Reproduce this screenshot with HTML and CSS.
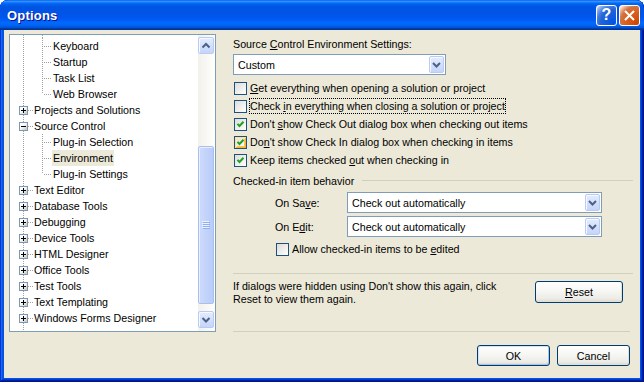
FILE: index.html
```html
<!DOCTYPE html>
<html lang="en">
<head>
    <meta charset="UTF-8">
    <title>Options</title>
    <link rel="stylesheet" href="styles.css">
</head>
<body>
    <div class="window">
        <div class="titlebar">
            <span class="title">Options</span>
            <div class="title-buttons">
                <span class="tb-btn help">?</span>
                <span class="tb-btn close">
                    <svg width="21" height="21" viewBox="0 0 21 21"><path d="M6 6l9 9M15 6l-9 9" stroke="#fff" stroke-width="2" fill="none"/></svg>
                </span>
            </div>
        </div>

        <div class="client">
            <!-- Tree of option pages -->
            <div class="tree">
                <div class="tree-list">
                    <div class="spacer"><span class="g"></span><span class="g pipe"></span></div>
                    <div class="node"><span class="g"></span><span class="g tee"></span><span class="label">Keyboard</span></div>
                    <div class="node"><span class="g"></span><span class="g tee"></span><span class="label">Startup</span></div>
                    <div class="node"><span class="g"></span><span class="g tee"></span><span class="label">Task List</span></div>
                    <div class="node"><span class="g"></span><span class="g ell"></span><span class="label">Web Browser</span></div>
                    <div class="node"><span class="g exp"><span class="exp-box"><svg width="7" height="7"><path d="M1 3.5h5M3.5 1v5"/></svg></span></span><span class="label">Projects and Solutions</span></div>
                    <div class="node"><span class="g exp"><span class="exp-box"><svg width="7" height="7"><path d="M1 3.5h5"/></svg></span></span><span class="label">Source Control</span></div>
                    <div class="node"><span class="g"></span><span class="g tee"></span><span class="label">Plug-in Selection</span></div>
                    <div class="node"><span class="g"></span><span class="g tee"></span><span class="label sel">Environment</span></div>
                    <div class="node"><span class="g"></span><span class="g ell"></span><span class="label">Plug-in Settings</span></div>
                    <div class="node"><span class="g exp"><span class="exp-box"><svg width="7" height="7"><path d="M1 3.5h5M3.5 1v5"/></svg></span></span><span class="label">Text Editor</span></div>
                    <div class="node"><span class="g exp"><span class="exp-box"><svg width="7" height="7"><path d="M1 3.5h5M3.5 1v5"/></svg></span></span><span class="label">Database Tools</span></div>
                    <div class="node"><span class="g exp"><span class="exp-box"><svg width="7" height="7"><path d="M1 3.5h5M3.5 1v5"/></svg></span></span><span class="label">Debugging</span></div>
                    <div class="node"><span class="g exp"><span class="exp-box"><svg width="7" height="7"><path d="M1 3.5h5M3.5 1v5"/></svg></span></span><span class="label">Device Tools</span></div>
                    <div class="node"><span class="g exp"><span class="exp-box"><svg width="7" height="7"><path d="M1 3.5h5M3.5 1v5"/></svg></span></span><span class="label">HTML Designer</span></div>
                    <div class="node"><span class="g exp"><span class="exp-box"><svg width="7" height="7"><path d="M1 3.5h5M3.5 1v5"/></svg></span></span><span class="label">Office Tools</span></div>
                    <div class="node"><span class="g exp"><span class="exp-box"><svg width="7" height="7"><path d="M1 3.5h5M3.5 1v5"/></svg></span></span><span class="label">Test Tools</span></div>
                    <div class="node"><span class="g exp"><span class="exp-box"><svg width="7" height="7"><path d="M1 3.5h5M3.5 1v5"/></svg></span></span><span class="label">Text Templating</span></div>
                    <div class="node"><span class="g exp"><span class="exp-box"><svg width="7" height="7"><path d="M1 3.5h5M3.5 1v5"/></svg></span></span><span class="label">Windows Forms Designer</span></div>
                </div>
                <div class="vscroll">
                    <span class="sb-btn up"><svg width="14" height="15" viewBox="0 0 14 15"><path d="M3.5 9.5l3.5-3.5 3.5 3.5" stroke="#4D6185" stroke-width="2" fill="none"/></svg></span>
                    <span class="sb-track"></span>
                    <span class="sb-thumb"><svg width="8" height="8" viewBox="0 0 8 8"><path d="M0 0.5h7M0 2.5h7M0 4.5h7M0 6.5h7" stroke="#EEF4FE"/><path d="M1 1.5h7M1 3.5h7M1 5.5h7M1 7.5h7" stroke="#8CB0F8"/></svg></span>
                    <span class="sb-btn down"><svg width="14" height="15" viewBox="0 0 14 15"><path d="M3.5 6l3.5 3.5 3.5-3.5" stroke="#4D6185" stroke-width="2" fill="none"/></svg></span>
                </div>
            </div>

            <!-- Settings page -->
            <div class="panel">
                <div class="caption">Source <u>C</u>ontrol Environment Settings:</div>
                <div class="combo combo-main">
                    <span class="combo-value">Custom</span>
                    <span class="drop"><svg width="13" height="15" viewBox="0 0 13 15"><path d="M3 6l3.5 3.5 3.5-3.5" stroke="#4D6185" stroke-width="2" fill="none"/></svg></span>
                </div>

                <div class="checks">
                    <div class="check-row"><span class="box"></span><span class="check-label"><u>G</u>et everything when opening a solution or project</span></div>
                    <div class="check-row"><span class="box"></span><span class="check-label focus">Check <u>i</u>n everything when closing a solution or project</span></div>
                    <div class="check-row"><span class="box"><svg width="11" height="11" viewBox="0 0 11 11"><path d="M2.5 4.8l2 2.2 4-4.2" stroke="#21A121" stroke-width="2" fill="none"/></svg></span><span class="check-label">Don't <u>s</u>how Check Out dialog box when checking out items</span></div>
                    <div class="check-row"><span class="box hot"><svg width="11" height="11" viewBox="0 0 11 11"><path d="M2.5 4.8l2 2.2 4-4.2" stroke="#21A121" stroke-width="2" fill="none"/></svg></span><span class="check-label">Do<u>n</u>'t show Check In dialog box when checking in items</span></div>
                    <div class="check-row"><span class="box"><svg width="11" height="11" viewBox="0 0 11 11"><path d="M2.5 4.8l2 2.2 4-4.2" stroke="#21A121" stroke-width="2" fill="none"/></svg></span><span class="check-label">Keep items checked <u>o</u>ut when checking in</span></div>
                </div>

                <div class="group-head"><span>Checked-in item behavior</span><span class="rule"></span></div>

                <div class="field-row">
                    <span class="field-label">On Sa<u>v</u>e:</span>
                    <div class="combo combo-field">
                        <span class="combo-value">Check out automatically</span>
                        <span class="drop"><svg width="13" height="15" viewBox="0 0 13 15"><path d="M3 6l3.5 3.5 3.5-3.5" stroke="#4D6185" stroke-width="2" fill="none"/></svg></span>
                    </div>
                </div>
                <div class="field-row second">
                    <span class="field-label">On E<u>d</u>it:</span>
                    <div class="combo combo-field">
                        <span class="combo-value">Check out automatically</span>
                        <span class="drop"><svg width="13" height="15" viewBox="0 0 13 15"><path d="M3 6l3.5 3.5 3.5-3.5" stroke="#4D6185" stroke-width="2" fill="none"/></svg></span>
                    </div>
                </div>
                <div class="check-row allow"><span class="box"></span><span class="check-label">Allow checked-in items to be <u>e</u>dited</span></div>

                <div class="separator"></div>

                <div class="info-row">
                    <p class="info-text">If dialogs were hidden using Don't show this again, click Reset to view them again.</p>
                    <span class="btn reset"><u>R</u>eset</span>
                </div>

                <div class="footer">
                    <div class="separator"></div>
                    <div class="footer-buttons">
                        <span class="btn default">OK</span>
                        <span class="btn">Cancel</span>
                    </div>
                </div>
            </div>
        </div>
    </div>
</body>
</html>
```

FILE: styles.css
```css
* {
    margin: 0;
    padding: 0;
    box-sizing: border-box;
}

body {
    width: 644px;
    height: 382px;
    overflow: hidden;
    background: #ffffff;
    font-family: "Liberation Sans", Arial, sans-serif;
    font-size: 10.7px;
    color: #000000;
}

u {
    text-decoration: underline;
    text-underline-offset: 1px;
}

/* Window frame */

.window {
    width: 644px;
    height: 382px;
    display: flex;
    flex-direction: column;
    background: #0055e5;
    border-radius: 8px 8px 0 0;
    overflow: hidden;
    box-shadow: inset -1px -1px #00138c, inset 1px 1px #0831d9,
                inset -2px -2px #001ea0, inset 2px 2px #166aee,
                inset -3px -3px #003bda, inset 3px 3px #0855dd;
}

.titlebar {
    height: 30px;
    flex: none;
    display: flex;
    align-items: center;
    padding: 0 4px 0 7px;
    border-radius: 8px 8px 0 0;
    background: linear-gradient(to bottom, #0058ee 0%, #3a93ff 4%, #288eff 6%, #127dff 8%,
                #036ffc 10%, #0262ee 14%, #0057e5 20%, #0054e3 24%, #0055eb 56%,
                #005bf5 66%, #026afe 76%, #0062ef 86%, #0052d6 92%, #0040ab 94%, #003092 100%);
}

.title {
    flex: 1;
    color: #ffffff;
    font-weight: bold;
    font-size: 13px;
    letter-spacing: 0.2px;
    text-shadow: 1px 1px #0f1089;
}

.title-buttons {
    display: flex;
    gap: 2px;
}

.tb-btn {
    width: 21px;
    height: 21px;
    border: 1px solid #ffffff;
    border-radius: 3px;
    display: flex;
    align-items: center;
    justify-content: center;
    color: #ffffff;
    font-weight: bold;
    font-size: 16px;
}

.tb-btn.help {
    background: radial-gradient(circle at 90% 90%, #0054e9 0%, #2263d5 55%, #4479e4 70%, #a3bbec 90%, #ffffff 100%);
}

.tb-btn.close {
    background: radial-gradient(circle at 90% 90%, #cc4600 0%, #dc6527 55%, #cd7546 70%, #ffccb2 90%, #ffffff 100%);
}

.tb-btn.close svg {
    margin: -1px;
}

.client {
    flex: 1;
    margin: 0 4px 4px 4px;
    background: #ece9d8;
    display: flex;
}

/* Tree view */

.tree {
    width: 207px;
    height: 298px;
    margin: 4px 0 0 5px;
    border: 1px solid #7f9db9;
    background: #ffffff;
    display: flex;
    flex: none;
}

.tree-list {
    flex: 1;
    overflow: hidden;
    padding-left: 4px;
    background-image: repeating-linear-gradient(to bottom, #a0a0a0 0 1px, transparent 1px 2px);
    background-size: 1px 100%;
    background-position: 13px 0;
    background-repeat: no-repeat;
}

.spacer {
    height: 3px;
    display: flex;
}

.node {
    height: 16px;
    display: flex;
    white-space: nowrap;
}

.g {
    width: 19px;
    height: 100%;
    flex: none;
    background-repeat: no-repeat;
}

.g.pipe {
    background-image: repeating-linear-gradient(to bottom, #a0a0a0 0 1px, transparent 1px 2px);
    background-size: 1px 100%;
    background-position: 9px 0;
}

.g.tee,
.g.ell {
    background-image: repeating-linear-gradient(to bottom, #a0a0a0 0 1px, transparent 1px 2px),
                      repeating-linear-gradient(to right, #a0a0a0 0 1px, transparent 1px 2px);
    background-size: 1px 100%, 9px 1px;
    background-position: 9px 0, 11px 8px;
}

.g.ell {
    background-size: 1px 8px, 9px 1px;
}

.g.exp {
    padding: 4px 0 0 5px;
    background-image: repeating-linear-gradient(to right, #a0a0a0 0 1px, transparent 1px 2px);
    background-size: 5px 1px;
    background-position: 14px 8px;
}

.exp-box {
    display: block;
    width: 9px;
    height: 9px;
    border: 1px solid #7898b5;
    background: linear-gradient(135deg, #ffffff 35%, #c6c5b8);
}

.exp-box svg {
    display: block;
}

.exp-box path {
    stroke: #000000;
    stroke-width: 1;
}

.label {
    padding: 0 1px;
    line-height: 16px;
}

.label.sel {
    background: #ece9d8;
}

/* Scroll bar */

.vscroll {
    width: 17px;
    flex: none;
    display: flex;
    flex-direction: column;
    padding: 2px 1px 3px 0;
    background: linear-gradient(to right, #f3f1ec, #fefefb);
}

.sb-btn,
.drop {
    display: flex;
    align-items: center;
    justify-content: center;
    border: 1px solid #b9cbf5;
    border-radius: 2px;
    background: linear-gradient(to bottom, #e4ecfd, #c4d5fb);
    box-shadow: inset 1px 1px #f6f9ff;
}

.sb-btn {
    height: 17px;
    flex: none;
}

.sb-track {
    flex: 1;
}

.sb-thumb {
    height: 158px;
    flex: none;
    margin-bottom: 7px;
    display: flex;
    align-items: center;
    justify-content: center;
    border: 1px solid #a9bff0;
    border-radius: 2px;
    background: linear-gradient(to right, #cddbfc, #b9ccf8);
    box-shadow: inset 1px 1px #e8effe;
}

/* Settings panel */

.panel {
    flex: 1;
    margin-left: 17px;
    padding: 7px 7px 12px 0;
    display: flex;
    flex-direction: column;
}

.caption {
    height: 14px;
    line-height: 14px;
}

.combo {
    height: 21px;
    border: 1px solid #7f9db9;
    background: #ffffff;
    padding: 1px;
    display: flex;
    align-items: center;
}

.combo-value {
    flex: 1;
    padding-left: 3px;
    white-space: nowrap;
}

.drop {
    width: 15px;
    height: 17px;
}

.combo-main {
    width: 213px;
    margin-top: 3px;
}

.checks {
    margin-top: 4px;
}

.check-row {
    height: 18px;
    display: flex;
    align-items: center;
    white-space: nowrap;
}

.box {
    width: 13px;
    height: 13px;
    flex: none;
    margin-left: 1px;
    border: 1px solid #1c5180;
    background: linear-gradient(135deg, #dcdcd7, #ffffff);
    display: flex;
    align-items: center;
    justify-content: center;
}

.box.hot {
    box-shadow: inset 1px 1px #fedf9c, inset -1px -1px #f8b330,
                inset 2px 2px #fde9b9, inset -2px -2px #fbc553;
}

.check-label {
    margin-left: 3px;
    line-height: 14px;
}

.check-label.focus {
    outline: 1px dotted #000000;
}

.group-head {
    height: 23px;
    display: flex;
    align-items: center;
}

.rule {
    flex: 1;
    margin-left: 8px;
    border-top: 1px solid #d0d0bf;
}

.field-row {
    height: 21px;
    display: flex;
    align-items: center;
}

.field-row.second {
    margin-top: 3px;
}

.field-label {
    width: 114px;
    padding-left: 42px;
}

.combo-field {
    width: 255px;
}

.check-row.allow {
    margin-top: 3px;
    padding-left: 42px;
}

.separator {
    border-top: 1px solid #d0d0bf;
}

.panel > .separator {
    margin-top: 15px;
}

.info-row {
    margin-top: 7px;
    display: flex;
    align-items: flex-start;
}

.info-text {
    width: 280px;
    margin-top: -1px;
    line-height: 13px;
}

.btn {
    display: flex;
    align-items: center;
    justify-content: center;
    border: 1px solid #003c74;
    border-radius: 3px;
    background: linear-gradient(to bottom, #ffffff 0%, #f6f6f3 45%, #ecebe6 85%, #d8d4ca 100%);
    box-shadow: inset -1px -1px #e3e0d4;
}

.btn.reset {
    width: 88px;
    height: 22px;
    margin-left: auto;
    margin-right: 10px;
}

.btn.default {
    box-shadow: inset 1px 1px #d2e4fb, inset -1px -1px #a9c2ec;
}

.footer {
    margin-top: auto;
}

.footer .separator {
    margin-right: 3px;
}

.footer-buttons {
    margin: 13px 3px 0 0;
    display: flex;
    justify-content: flex-end;
    gap: 7px;
}

.footer-buttons .btn {
    width: 73px;
    height: 21px;
}
```
